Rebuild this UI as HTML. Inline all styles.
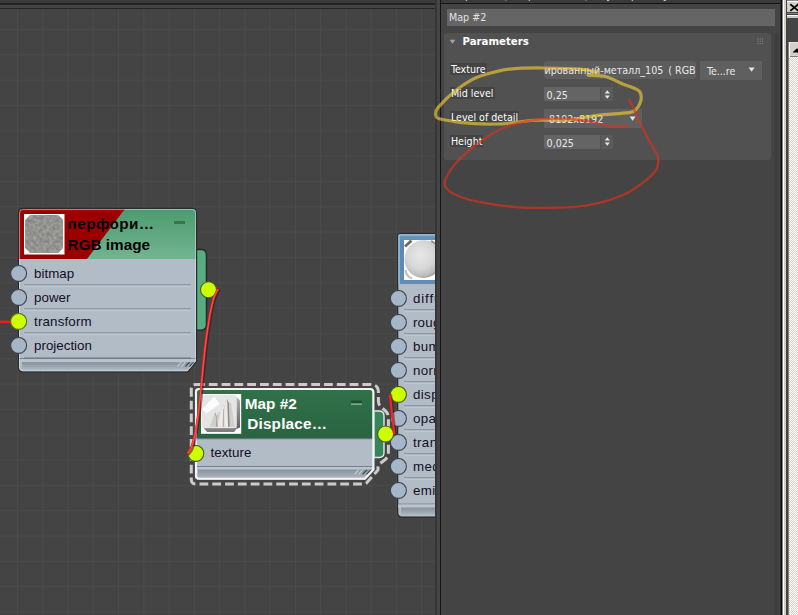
<!DOCTYPE html>
<html lang="ru">
<head>
<meta charset="utf-8">
<title>Slate Material Editor</title>
<style>
html,body{margin:0;padding:0;}
body{width:798px;height:615px;overflow:hidden;position:relative;background:#444444;font-family:"Liberation Sans","DejaVu Sans",sans-serif;}
.abs{position:absolute;}
#canvas{position:absolute;left:0;top:9px;width:435px;height:606px;overflow:hidden;background-color:#444444;
 background-image:linear-gradient(to right,#4b4b4b 0,#4b4b4b 1px,transparent 1px),linear-gradient(to bottom,#4b4b4b 0,#4b4b4b 1px,transparent 1px);
 background-size:25.28px 100%,100% 25.33px;background-position:17px 0,0 20px;}
/* nodes */
.node{position:absolute;box-sizing:border-box;}
.slotlbl{position:absolute;font-size:13.33px;color:#14102a;line-height:16px;white-space:nowrap;}
.sock{position:absolute;width:15px;height:15px;border-radius:50%;background:#a6b6c9;border:1px solid #3c4654;box-sizing:content-box;}
.sock.on{background:#ccff00;border-color:#6a7a30;}
.sep{position:absolute;height:1px;background:#76828f;box-shadow:0 1px 0 #dfe5eb;}
.ttl{position:absolute;font-weight:bold;font-size:14px;line-height:16px;white-space:nowrap;}
/* right panel */
#panel{position:absolute;left:441px;top:0;width:340px;height:615px;background:#444444;overflow:hidden;font-family:"DejaVu Sans Condensed","DejaVu Sans","Liberation Sans",sans-serif;font-stretch:condensed;font-size:10.6px;color:#e6e6e6;}
.lbl{position:absolute;height:12px;line-height:12px;background:#444444;color:#ffffff;padding:0 1px;white-space:nowrap;}
.fld{position:absolute;background:#646464;box-sizing:border-box;white-space:nowrap;overflow:hidden;color:#e8e8e8;}
</style>
</head>
<body>

<!-- top strip over canvas -->
<div class="abs" style="left:0;top:0;width:436px;height:9px;background:#444444;"></div>
<div class="abs" style="left:0;top:0;width:436px;height:3px;background:#3b3b3b;"></div>
<div class="abs" style="left:0;top:3px;width:436px;height:1.5px;background:#222222;"></div>
<div class="abs" style="left:0;top:7.5px;width:436px;height:1.5px;background:#262626;"></div>

<div id="canvas">
<svg class="abs" style="left:0;top:-9px;" width="435" height="624" viewBox="0 0 435 624" font-family="'Liberation Sans','DejaVu Sans',sans-serif">
<defs>
 <linearGradient id="gHdr1" x1="0" y1="0" x2="0" y2="1"><stop offset="0" stop-color="#4c9a6f"/><stop offset="1" stop-color="#72b591"/></linearGradient>
 <linearGradient id="gHdr2" x1="0" y1="0" x2="0" y2="1"><stop offset="0" stop-color="#30724a"/><stop offset="1" stop-color="#2a6341"/></linearGradient>
 <linearGradient id="gHdr3" x1="0" y1="0" x2="0" y2="1"><stop offset="0" stop-color="#6b9bc2"/><stop offset="0.2" stop-color="#5a88b0"/><stop offset="1" stop-color="#5f8db6"/></linearGradient>
 <linearGradient id="gFoot" x1="0" y1="0" x2="0" y2="1"><stop offset="0" stop-color="#87929e"/><stop offset="1" stop-color="#aab4be"/></linearGradient>
 <radialGradient id="gSphere" cx="0.42" cy="0.4" r="0.62"><stop offset="0" stop-color="#e8e8e8"/><stop offset="0.6" stop-color="#d6d6d6"/><stop offset="0.88" stop-color="#bcbcbc"/><stop offset="1" stop-color="#a2a2a2"/></radialGradient>
 <linearGradient id="gSide" x1="0" y1="0" x2="0" y2="1"><stop offset="0" stop-color="#b4b4b4"/><stop offset="1" stop-color="#5e5e5e"/></linearGradient>
 <filter id="fSoft" x="-5%" y="-5%" width="110%" height="110%"><feGaussianBlur stdDeviation="0.45"/></filter>
 <filter id="fNoise" x="0" y="0" width="100%" height="100%" color-interpolation-filters="sRGB"><feTurbulence type="fractalNoise" baseFrequency="0.3" numOctaves="2" seed="7" result="n"/><feColorMatrix in="n" type="matrix" values="0.24 0 0 0 0.455  0.24 0 0 0 0.455  0.24 0 0 0 0.445  0 0 0 0 1" result="g"/><feComposite in="g" in2="SourceGraphic" operator="in"/></filter>
 <clipPath id="cN1"><path d="M19,213 Q19,209 23,209 L192,209 Q196,209 196,213 L196,361 L187.5,371.3 L23,371.3 Q19,371.3 19,367.3 Z"/></clipPath>
 <clipPath id="cN2"><path d="M195,392 Q195,388 199,388 L370,388 Q374.3,388 374.3,392 L374.3,470 L365.3,479.7 L199,479.7 Q195,479.7 195,475.7 Z"/></clipPath>
 <clipPath id="cN3"><path d="M398.3,236.5 Q398.3,234 400.8,234 L440,234 L440,516.5 L402.3,516.5 Q398.3,516.5 398.3,512.5 Z"/></clipPath>
</defs>

<!-- ===== Node 1 : RGB image ===== -->
<g id="node1">
 <path d="M196,249.4 L201,249.4 Q206.5,249.4 206.5,255 L206.5,324.6 Q206.5,330.2 201,330.2 L196,330.2 Z" fill="#57ad80" stroke="#2c2c2c" stroke-width="1.6"/>
 <path d="M19,213 Q19,209 23,209 L192,209 Q196,209 196,213 L196,361 L187.5,371.3 L23,371.3 Q19,371.3 19,367.3 Z" fill="none" stroke="#2a2a2a" stroke-width="2.4"/>
 <path d="M19,213 Q19,209 23,209 L192,209 Q196,209 196,213 L196,361 L187.5,371.3 L23,371.3 Q19,371.3 19,367.3 Z" fill="#b2bcc6"/>
 <g clip-path="url(#cN1)">
  <rect x="19" y="209" width="179" height="50" fill="url(#gHdr1)"/>
  <polygon points="19,209 124.8,209 87,259 19,259" fill="#9b0000"/>
  <polygon points="19,209 124.8,209 123.2,211.2 21.3,211.2 21.3,259 19,259" fill="#b40000"/>
  <rect x="19" y="358.2" width="179" height="0.9" fill="#6f7b88"/>
  <rect x="19" y="359.1" width="179" height="3.1" fill="#bbc4cd"/>
  <rect x="22" y="362.2" width="172" height="7" fill="url(#gFoot)"/>
  <g stroke-width="1.1"><line x1="177.3" y1="366.6" x2="181.5" y2="362" stroke="#c6ced6"/><line x1="181.3" y1="366.6" x2="185.5" y2="362" stroke="#c6ced6"/><line x1="185.4" y1="366.6" x2="189.6" y2="362" stroke="#3c4148"/><line x1="189.5" y1="366.6" x2="193.7" y2="362" stroke="#3c4148"/></g>
 </g>
 <path d="M19.5,213 Q19.5,209.5 23,209.5 L192,209.5 Q195.5,209.5 195.5,213 L195.5,360.8 L187.2,370.8 L23,370.8 Q19.5,370.8 19.5,367.3 Z" fill="none" stroke="#dce8f2" stroke-opacity="0.5" stroke-width="1"/>
 <!-- thumbnail -->
 <rect x="24" y="214" width="40.5" height="40.5" fill="#ffffff"/>
 <polygon points="30.3,215 58,215 63,220 63,248 58,253 30.3,253 25.3,248 25.3,220" fill="#949492"/>
 <polygon points="30.3,215 58,215 63,220 63,248 58,253 30.3,253 25.3,248 25.3,220" fill="#949492" filter="url(#fNoise)"/>
 <!-- minimize -->
 <rect x="174" y="221" width="11" height="3" fill="#3b7354"/>
 <!-- separators -->
 <g>
  <rect x="24" y="284.5" width="167" height="1" fill="#697583"/><rect x="24" y="285.5" width="167" height="1" fill="#ccd4dc"/>
  <rect x="24" y="308.5" width="167" height="1" fill="#697583"/><rect x="24" y="309.5" width="167" height="1" fill="#ccd4dc"/>
  <rect x="24" y="332.5" width="167" height="1" fill="#697583"/><rect x="24" y="333.5" width="167" height="1" fill="#ccd4dc"/>
  <rect x="24" y="357.5" width="167" height="1" fill="#697583"/>
 </g>
 <!-- sockets -->
 <line x1="0" y1="321.8" x2="12" y2="321.8" stroke="#ff1a1a" stroke-width="2.2"/>
 <g fill="#a6b6c9" stroke="#3a4452" stroke-width="1.1">
  <circle cx="18.6" cy="273.4" r="8"/><circle cx="18.6" cy="297.4" r="8"/><circle cx="18.6" cy="345.4" r="8"/>
 </g>
 <circle cx="18.6" cy="321.4" r="8" fill="#ccff00" stroke="#5e6e2a" stroke-width="1.1"/>
 <circle cx="208.5" cy="289.7" r="8" fill="#ccff00" stroke="#4c5a28" stroke-width="1.1"/>
 <!-- text -->
 <g font-weight="bold" font-size="15.3px" fill="#050505">
  <text x="67.6" y="228.6" letter-spacing="0.4">перфори…</text>
  <text x="67.6" y="249.8" letter-spacing="0">RGB image</text>
 </g>
 <g font-size="13.33px" fill="#120e26">
  <text x="34.1" y="277.9">bitmap</text>
  <text x="34.1" y="301.9">power</text>
  <text x="34.1" y="325.9" letter-spacing="0.15">transform</text>
  <text x="34.1" y="349.9">projection</text>
 </g>
</g>

<!-- ===== Node 3 : material (clipped on right) ===== -->
<g id="node3">
 <path d="M398.3,236.5 Q398.3,234 400.8,234 L440,234 L440,516.5 L402.3,516.5 Q398.3,516.5 398.3,512.5 Z" fill="none" stroke="#2a2a2a" stroke-width="2.4"/>
 <path d="M398.3,236.5 Q398.3,234 400.8,234 L440,234 L440,516.5 L402.3,516.5 Q398.3,516.5 398.3,512.5 Z" fill="#b2bcc6"/>
 <g clip-path="url(#cN3)">
  <rect x="398" y="234" width="42" height="50" fill="url(#gHdr3)"/>
  <rect x="398" y="234" width="42" height="1.8" fill="#8fb4d4"/>
  <rect x="398" y="234" width="2" height="50" fill="#8fb4d4"/>
  <rect x="404" y="240" width="40" height="40" fill="#ffffff"/>
  <g filter="url(#fSoft)">
   <line x1="405" y1="246.5" x2="411.5" y2="240.6" stroke="#6c6c6c" stroke-width="2.8"/>
   <line x1="431" y1="241" x2="436" y2="244.5" stroke="#8c8c8c" stroke-width="2.2"/>
   <path d="M405.5,270 Q406,276 412,278.5" stroke="#c4c4c4" stroke-width="2.4" fill="none"/>
   <circle cx="423.3" cy="259.1" r="18.8" fill="url(#gSphere)"/>
  </g>
  <rect x="398" y="503.6" width="42" height="0.9" fill="#6f7b88"/>
  <rect x="398" y="504.5" width="42" height="3" fill="#bbc4cd"/>
  <rect x="401" y="507.5" width="40" height="7" fill="url(#gFoot)"/>
 </g>
 <g>
  <rect x="404" y="309.5" width="33" height="1" fill="#697583"/><rect x="404" y="310.5" width="33" height="1" fill="#ccd4dc"/>
  <rect x="404" y="333.5" width="33" height="1" fill="#697583"/><rect x="404" y="334.5" width="33" height="1" fill="#ccd4dc"/>
  <rect x="404" y="357.5" width="33" height="1" fill="#697583"/><rect x="404" y="358.5" width="33" height="1" fill="#ccd4dc"/>
  <rect x="404" y="381.5" width="33" height="1" fill="#697583"/><rect x="404" y="382.5" width="33" height="1" fill="#ccd4dc"/>
  <rect x="404" y="405.5" width="33" height="1" fill="#697583"/><rect x="404" y="406.5" width="33" height="1" fill="#ccd4dc"/>
  <rect x="404" y="429.5" width="33" height="1" fill="#697583"/><rect x="404" y="430.5" width="33" height="1" fill="#ccd4dc"/>
  <rect x="404" y="453.5" width="33" height="1" fill="#697583"/><rect x="404" y="454.5" width="33" height="1" fill="#ccd4dc"/>
  <rect x="404" y="477.5" width="33" height="1" fill="#697583"/><rect x="404" y="478.5" width="33" height="1" fill="#ccd4dc"/>
 </g>
 <g font-size="13.33px" fill="#120e26">
  <text x="412.9" y="302.9" letter-spacing="0.9">diffuse</text>
  <text x="412.9" y="326.9" letter-spacing="0.25">roughness</text>
  <text x="412.9" y="350.9" letter-spacing="0.4">bump</text>
  <text x="412.9" y="374.9" letter-spacing="0.4">normal</text>
  <text x="412.9" y="398.9" letter-spacing="0.4">displacement</text>
  <text x="412.9" y="422.9" letter-spacing="0.4">opacity</text>
  <text x="412.9" y="446.9" letter-spacing="0.4">transmission</text>
  <text x="412.9" y="470.9" letter-spacing="0.4">medium</text>
  <text x="412.9" y="494.9" letter-spacing="0.4">emission</text>
 </g>
</g>

<!-- ===== Node 2 : Map #2 Displacement ===== -->
<g id="node2">
 <!-- selection dashes -->
 <path d="M196,384.4 L370,384.4 Q378.4,384.4 378.4,392 L378.4,401 Q378.4,405 381.5,407.5 L385.5,411 Q388.4,413.5 388.4,418 L388.4,452 Q388.4,457.5 384,460.5 L380,463.5 Q378,465 378,468 L378,470 L366.5,483 Q365.5,484 364,484 L196,484 Q191.3,484 191.3,479.5 L191.3,389 Q191.3,384.4 196,384.4 Z" fill="none" stroke="#cbcbcb" stroke-width="3" stroke-dasharray="8.8 4"/>
 <path d="M374,411 L379,411 Q384,411 384,416 L384,452.5 Q384,457.5 379,457.5 L374,457.5 Z" fill="#35875a" stroke="#e4e8e4" stroke-width="1.4"/>
 <path d="M195,392 Q195,388 199,388 L370,388 Q374.3,388 374.3,392 L374.3,470 L365.3,479.7 L199,479.7 Q195,479.7 195,475.7 Z" fill="#b2bcc6"/>
 <g clip-path="url(#cN2)">
  <rect x="195" y="388" width="180" height="50.2" fill="url(#gHdr2)"/>
  <rect x="195" y="438.2" width="180" height="1" fill="#5a6675"/>
  <rect x="195" y="466.1" width="180" height="0.9" fill="#6f7b88"/>
  <rect x="195" y="467" width="180" height="2.6" fill="#bbc4cd"/>
  <rect x="198" y="469.6" width="174" height="8" fill="url(#gFoot)"/>
  <g stroke-width="1.1"><line x1="354.5" y1="474.3" x2="358.7" y2="469.9" stroke="#c6ced6"/><line x1="358.5" y1="474.3" x2="362.7" y2="469.9" stroke="#c6ced6"/><line x1="362.6" y1="474.3" x2="366.8" y2="469.9" stroke="#3c4148"/><line x1="366.7" y1="474.3" x2="370.9" y2="469.9" stroke="#3c4148"/></g>
 </g>
 <path d="M196,392 Q196,389 199,389 L370,389 Q373.3,389 373.3,392 L373.3,469.6 L364.9,478.7 L199,478.7 Q196,478.7 196,475.7 Z" fill="none" stroke="#f4f4f4" stroke-width="2.1"/>
 <!-- thumbnail -->
 <rect x="201" y="394" width="40.2" height="39.8" fill="#ffffff"/>
 <g filter="url(#fSoft)">
  <polygon points="236.3,396.6 240,400.4 240,427.4 236.3,429" fill="url(#gSide)"/>
  <polygon points="203.5,427.8 236.5,427.8 236.5,428.8 234.2,432 207,432" fill="#7e7e7e"/>
  <rect x="201.7" y="394.7" width="35" height="33.5" rx="3" ry="3" fill="#e5e5e5"/>
  <polygon points="202.1,409.3 214.3,396.5 219.6,404.0 206.6,413.4" fill="#fcfcfc"/>
  <polygon points="209.8,426.8 213.5,415.8 215.1,412.6 216.7,415.8 219.2,411.4 220.4,413.4 223.2,404.0 224.9,407.7 227.3,398.8 228.9,403.2 231.0,402.4 232.6,413.4 234.6,426.8" fill="#d2cec8"/>
  <polygon points="216.7,426.8 220.4,413.4 223.2,404.0 224.5,410.1 227.3,398.8 228.1,426.8" fill="#eeebe6"/>
  <polygon points="228.1,426.8 227.3,398.8 228.9,403.2 229.7,426.8" fill="#8f8a84"/>
  <polygon points="214.7,413.4 216.3,418.3 215.9,426.8 218.0,426.8 216.7,415.8 215.1,412.6" fill="#a9a49c"/>
  <polygon points="222.6,426.8 223.2,408 224.2,410 224.2,426.8" fill="#b5b0a8"/>
 </g>
 <!-- minimize -->
 <rect x="351" y="400.5" width="11" height="3" fill="#1f4e31"/><rect x="351" y="403.5" width="11" height="1.2" fill="#9dbfa9"/>
 <!-- text -->
 <g font-weight="bold" font-size="15.3px" fill="#ffffff">
  <text x="244.7" y="408.5" letter-spacing="0.05">Map #2</text>
  <text x="247.2" y="428.6" letter-spacing="0.2">Displace…</text>
 </g>
 <text x="210.6" y="456.7" font-size="13.33px" fill="#120e26">texture</text>
</g>


<g fill="#a6b6c9" stroke="#3a4452" stroke-width="1.1">
 <circle cx="398.4" cy="298.4" r="8"/><circle cx="398.4" cy="322.4" r="8"/><circle cx="398.4" cy="346.4" r="8"/><circle cx="398.4" cy="370.4" r="8"/>
 <circle cx="398.4" cy="418.4" r="8"/><circle cx="398.4" cy="442.4" r="8"/><circle cx="398.4" cy="466.4" r="8"/><circle cx="398.4" cy="490.4" r="8"/>
</g>
<circle cx="398.4" cy="394.4" r="8" fill="#ccff00" stroke="#4c5a28" stroke-width="1.1"/>
<circle cx="385.6" cy="434" r="8" fill="#ccff00" stroke="#4c5a28" stroke-width="1.1"/>
<circle cx="195.8" cy="453.4" r="8" fill="#ccff00" stroke="#4c5a28" stroke-width="1.1"/>
<!-- wires -->
<g fill="none" stroke-linecap="round">
 <path d="M217.9,289.6 C217.2,290.9 215.2,293.8 213.9,297.6 C212.7,301.4 211.5,306.8 210.4,312.2 C209.3,317.6 208.5,323.0 207.5,329.8 C206.5,336.6 205.4,345.4 204.5,353.2 C203.6,361.0 202.9,369.3 202.2,376.6 C201.5,383.9 200.8,390.2 200.1,397 C199.4,403.8 198.7,411.1 197.8,417.5 C196.9,423.9 196.0,430.1 194.9,435.1 C193.8,440.2 192.4,444.8 191.3,447.8 C190.2,450.8 188.6,452.0 188.1,452.9" stroke="#1e1e1e" stroke-opacity="0.55" stroke-width="3.4" transform="translate(0.8,0.5)"/>
 <path d="M217.9,289.6 C217.2,290.9 215.2,293.8 213.9,297.6 C212.7,301.4 211.5,306.8 210.4,312.2 C209.3,317.6 208.5,323.0 207.5,329.8 C206.5,336.6 205.4,345.4 204.5,353.2 C203.6,361.0 202.9,369.3 202.2,376.6 C201.5,383.9 200.8,390.2 200.1,397 C199.4,403.8 198.7,411.1 197.8,417.5 C196.9,423.9 196.0,430.1 194.9,435.1 C193.8,440.2 192.4,444.8 191.3,447.8 C190.2,450.8 188.6,452.0 188.1,452.9" stroke="#ff1f1f" stroke-width="2.3"/>
 <path d="M217.9,289.6 C217.2,290.9 215.2,293.8 213.9,297.6 C212.7,301.4 211.5,306.8 210.4,312.2 C209.3,317.6 208.5,323.0 207.5,329.8 C206.5,336.6 205.4,345.4 204.5,353.2 C203.6,361.0 202.9,369.3 202.2,376.6 C201.5,383.9 200.8,390.2 200.1,397 C199.4,403.8 198.7,411.1 197.8,417.5 C196.9,423.9 196.0,430.1 194.9,435.1 C193.8,440.2 192.4,444.8 191.3,447.8 C190.2,450.8 188.6,452.0 188.1,452.9" stroke="#ff8a8a" stroke-opacity="0.7" stroke-width="0.7"/>
 <path d="M390,395.5 L394.2,433.6" stroke="#1e1e1e" stroke-opacity="0.5" stroke-width="3.2" transform="translate(0.7,0)"/>
 <path d="M390,395.5 L394.2,433.6" stroke="#ff1f1f" stroke-width="2.2"/>
</g>
</svg>
</div>

<!-- splitter -->
<div class="abs" style="left:435px;top:0;width:1.5px;height:615px;background:#363636;"></div>
<div class="abs" style="left:436.5px;top:0;width:4px;height:615px;background:#454545;"></div>
<div class="abs" style="left:439.9px;top:0;width:1.7px;height:615px;background:#141414;"></div>

<div id="panel">
<!-- top strip -->
<div class="abs" style="left:0;top:0;width:340px;height:3px;background:#3a3a3a;"></div>
<div class="abs" style="left:0;top:3px;width:340px;height:1.3px;background:#141414;"></div>
<div class="abs" style="left:10px;top:-11.1px;color:#e0e0e0;white-space:nowrap;word-spacing:3px;">Map #2 &nbsp;( Displacement ) &nbsp; [ Displace ]</div>
<!-- name field -->
<div class="fld" style="left:6px;top:9px;width:328px;height:16.5px;background:#656565;line-height:16px;padding-left:2px;color:#e2e2e2;">Map #2</div>
<!-- rollout -->
<div class="abs" style="left:2.5px;top:33px;width:327.5px;height:126.5px;background:#515151;border-radius:3px;"></div>
<svg class="abs" style="left:8px;top:39px;" width="8" height="6" viewBox="0 0 8 6"><polygon points="0.6,0.8 6.4,0.8 3.5,4.8" fill="#a2a2a2"/></svg>
<div class="abs" style="left:21.5px;top:35px;font-family:'DejaVu Sans','Liberation Sans',sans-serif;font-stretch:normal;font-weight:bold;font-size:10.2px;line-height:14px;color:#ffffff;white-space:nowrap;">Parameters</div>
<svg class="abs" style="left:316px;top:38px;" width="8" height="8" viewBox="0 0 8 8" fill="#8c8c8c"><rect x="0.5" y="0.5" width="1" height="1"/><rect x="2.7" y="0.5" width="1" height="1"/><rect x="4.9" y="0.5" width="1" height="1"/><rect x="0.5" y="2.7" width="1" height="1"/><rect x="2.7" y="2.7" width="1" height="1"/><rect x="4.9" y="2.7" width="1" height="1"/><rect x="0.5" y="4.9" width="1" height="1"/><rect x="2.7" y="4.9" width="1" height="1"/><rect x="4.9" y="4.9" width="1" height="1"/></svg>
<!-- labels -->
<div class="lbl" style="left:8.9px;top:62.8px;">Texture</div>
<div class="lbl" style="left:8.9px;top:86.8px;">Mid level</div>
<div class="lbl" style="left:8.9px;top:110.8px;">Level of detail</div>
<div class="lbl" style="left:8.9px;top:134.8px;">Height</div>
<!-- texture button -->
<div class="fld" style="left:102.6px;top:60.7px;width:152.5px;height:18.5px;background:#5d5d5d;border-radius:3px;line-height:18px;direction:rtl;text-align:left;"><span style="direction:ltr;unicode-bidi:embed;position:absolute;right:0.5px;top:0.2px;">Map #8 ( перфорированный-металл_105<span style="margin-left:2px">&nbsp;</span>( RGB</span></div>
<!-- dropdown Te...re -->
<div class="fld" style="left:259.4px;top:60.7px;width:62px;height:19.5px;background:#5f5f5f;line-height:20.2px;padding-left:6.5px;">Te...re</div>
<svg class="abs" style="left:307px;top:66.5px;" width="8" height="6" viewBox="0 0 8 6"><polygon points="0.6,0.6 6.6,0.6 3.6,4.8" fill="#e6e6e6"/></svg>
<!-- spinner Mid level -->
<div class="fld" style="left:102.6px;top:87px;width:56.6px;height:14.3px;line-height:16px;padding-left:3px;">0,25</div>
<div class="fld" style="left:160px;top:87px;width:12.3px;height:14.3px;background:#5b5b5b;"></div>
<svg class="abs" style="left:163px;top:89.5px;" width="7" height="10" viewBox="0 0 7 10" fill="#eaeaea"><polygon points="3.3,0.3 5.8,3.6 0.8,3.6"/><polygon points="0.8,5.4 5.8,5.4 3.3,8.7"/></svg>
<!-- dropdown Level of detail -->
<div class="fld" style="left:102.6px;top:108.7px;width:98.5px;height:19.5px;background:#5f5f5f;line-height:20px;padding-left:5.5px;">8192x8192</div>
<svg class="abs" style="left:187.5px;top:115.5px;" width="8" height="6" viewBox="0 0 8 6"><polygon points="0.6,0.6 6.6,0.6 3.6,4.8" fill="#e6e6e6"/></svg>
<!-- spinner Height -->
<div class="fld" style="left:102.6px;top:134.7px;width:56.6px;height:14.3px;line-height:16.5px;padding-left:3px;">0,025</div>
<div class="fld" style="left:160px;top:134.7px;width:12.3px;height:14.3px;background:#5b5b5b;"></div>
<svg class="abs" style="left:163px;top:137.2px;" width="7" height="10" viewBox="0 0 7 10" fill="#eaeaea"><polygon points="3.3,0.3 5.8,3.6 0.8,3.6"/><polygon points="0.8,5.4 5.8,5.4 3.3,8.7"/></svg>
<!-- panel scrollbar track -->
<div class="abs" style="left:332.8px;top:32.5px;width:5.5px;height:590px;background:#3f3f3f;border-radius:2.5px;"></div>
</div>


<!-- hand-drawn annotations -->
<svg class="abs" style="left:0;top:0;pointer-events:none;" width="798" height="615" viewBox="0 0 798 615" fill="none" stroke-linecap="round" stroke-linejoin="round">
 <path id="yellow" d="M588,75.2 C594,75.6 600,75.4 606.4,76.7 C612,78.3 618,82 624,84.6 C630,86.6 637,88.6 639.7,91.6 C641.6,95 641.6,100 639.7,103.9 C638,108 634,112 629.2,112.6 C620,113.8 605,114 597.6,115.3 C590,116.5 575,119.5 565,120.5 C560,120.8 545,119.5 530.3,120.5 C520,122 505,123.8 495,124 C485,124.2 470,123.5 460,122.3 C445,120 438,119.5 436.4,117 C434.8,113.5 436,110 438.2,107.4 C442,103 450,95 456.6,89.8 C463,85 472,78.5 481,75.8 C490,73 500,70 509,69.1 C520,68 530,67.8 544,68 C558,68.2 570,68.4 580,69 C586,69.5 592,70.6 597,72.2" stroke="#f6d036" stroke-opacity="0.62" stroke-width="3.2"/>
 <path id="red" d="M629.2,99.5 C631,103 635,111 636.2,114.4 C638,121 640,124 642.5,128 C645,133 652,146 656,152.1 C658,156 658.8,159 658.2,162.6 C658,166 657.5,168 656,170.2 C653,174.5 649,177.5 645.5,180.7 C641,184.5 636,188 630.5,191.2 C624,195 616,197.8 609.4,200.2 C601,203 593,204.5 585.4,205.6 C575,207 565,207.5 555.3,207.7 C545,207.9 535,207.9 525.2,207.7 C515,207.3 505,206 495.2,204.7 C487,203.5 479,202 471.1,200.2 C465,198.5 459,196.5 454.5,194.2 C450,192 447,189.5 445.5,186.7 C444,184 444.3,181.5 445.5,179.2 C447,175.5 449,172 451.5,168.6 C454.5,164.5 458,160.5 462,156.6 C466,153 470,149.5 474.1,146.1 C479,142.5 484,139 489.1,135.6 C495,132 501,129 507.2,126.5 C513,124.3 519,122.7 525.2,121.4 C531,120.2 537,119.4 543.3,119 C552,118.5 561,118.5 570.3,119 C577,119.6 584,120.6 591.4,122 C597,123.2 603,124.6 609.4,125.6 C615,126.4 621,126.7 627.5,126.5" stroke="#e23018" stroke-opacity="0.62" stroke-width="2.4"/>
</svg>

<!-- right edge : frame + classic scrollbar -->
<div class="abs" style="left:780px;top:0;width:1px;height:615px;background:#2c2c2c;"></div>
<div class="abs" style="left:780.8px;top:0;width:1.6px;height:615px;background:#0c0c0c;"></div>
<div class="abs" style="left:782.3px;top:0;width:0.6px;height:615px;background:#808080;"></div>
<div class="abs" style="left:782.9px;top:0;width:1px;height:615px;background:#ffffff;"></div>
<div class="abs" style="left:783.9px;top:0;width:1.8px;height:615px;background:#d4d0c8;"></div>
<div class="abs" style="left:785.7px;top:0;width:1.3px;height:615px;background:#404040;"></div>
<div class="abs" style="left:787px;top:0;width:11px;height:615px;background:#444444;"></div>
<!-- close button -->
<div class="abs" style="left:787px;top:0;width:11px;height:1px;background:#8a8a8a;"></div>
<div class="abs" style="left:787px;top:1px;width:11px;height:1.3px;background:#ffffff;"></div>
<div class="abs" style="left:787px;top:2.3px;width:11px;height:10.2px;background:#d4d0c8;"></div>
<div class="abs" style="left:787px;top:12.5px;width:11px;height:1px;background:#808080;"></div>
<div class="abs" style="left:787px;top:13.5px;width:11px;height:1.3px;background:#404040;"></div>
<div class="abs" style="left:787px;top:14.8px;width:11px;height:1.2px;background:#ffffff;"></div>
<div class="abs" style="left:787px;top:16px;width:11px;height:1.7px;background:#c6c6c6;"></div>
<svg class="abs" style="left:789px;top:3px;" width="9" height="9" viewBox="0 0 9 9"><path d="M1.3,1.3 L9.3,7.9 M9.3,1.3 L1.3,7.9" stroke="#000" stroke-width="1.8" fill="none"/></svg>
<!-- scrollbar -->
<div class="abs" style="left:787.5px;top:42px;width:1.3px;height:573px;background:#808080;"></div>
<div class="abs" style="left:788.8px;top:57px;width:10px;height:558px;background-color:#ffffff;background-image:conic-gradient(#d4d0c8 25%,#ffffff 0 50%,#d4d0c8 0 75%,#ffffff 0);background-size:2px 2px;"></div>
<div class="abs" style="left:788.8px;top:42px;width:10px;height:15px;background:#d4d0c8;box-shadow:inset 1px 1px 0 #ffffff, inset 0 -1px 0 #808080;"></div>
<div class="abs" style="left:788.8px;top:42px;width:10px;height:1px;background:#e8e6e0;"></div>
<svg class="abs" style="left:792px;top:47.5px;" width="6" height="5" viewBox="0 0 6 5"><polygon points="0.5,4.4 5,0.2 9.5,4.4" fill="#000"/></svg>

</body>
</html>
